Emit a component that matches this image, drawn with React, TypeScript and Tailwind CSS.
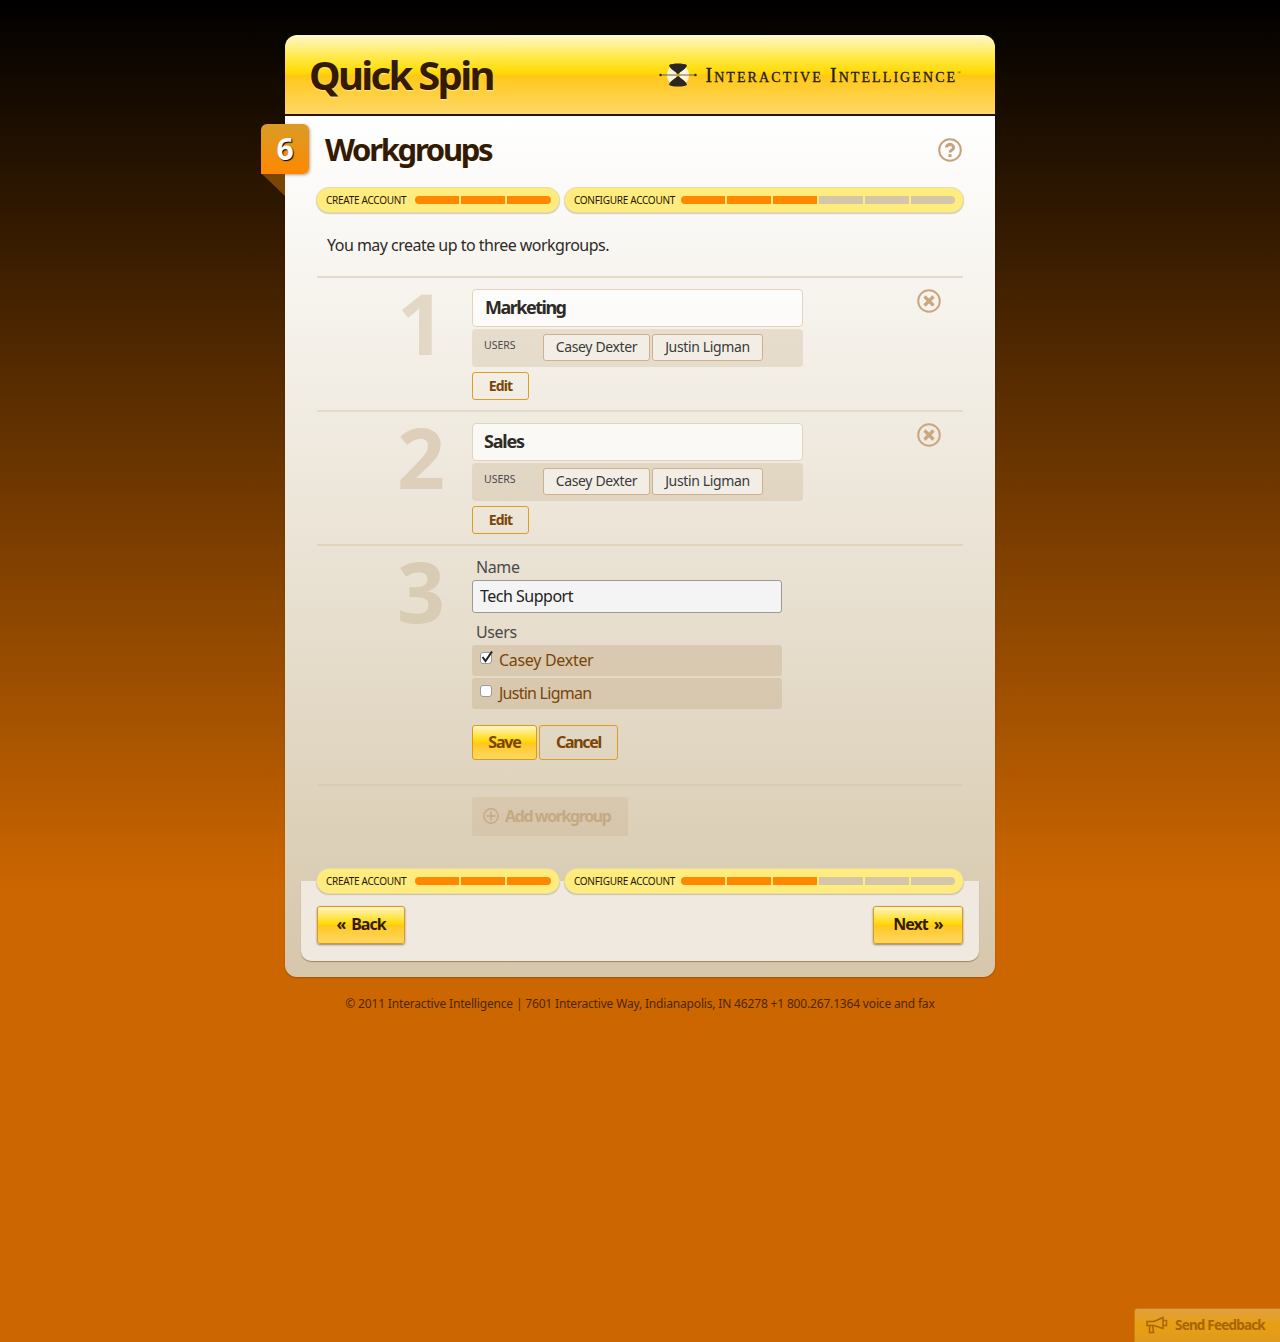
const goldButton =
  "bg-[linear-gradient(180deg,#fff6c4_0%,#ffd800_48%,#ffc820_52%,#ffd766_100%)] border border-[#d99a1c]";

function ProgressPill({ label, total, done, wide }: { label: string; total: number; done: number; wide?: boolean }) {
  return (
    <div
      className={`flex h-[26px] items-center justify-between rounded-[13px] border border-[#e6dca8] bg-[#ffec7f] pl-[9px] pr-[8px] shadow-[0_1px_1px_rgba(120,90,40,0.3)] ${
        wide ? "w-[400px]" : "w-[244px]"
      }`}
    >
      <span className="pb-[1px] text-[10px] leading-none tracking-[-0.28px] text-[#2a1500]">{label}</span>
      <div className="flex gap-[2px]">
        {Array.from({ length: total }).map((_, i) => (
          <span
            key={i}
            className={`block h-[8px] w-[44px] first:rounded-l-[4px] last:rounded-r-[4px] ${
              i < done ? "bg-[#ff8800]" : "bg-[#d6c6a9]"
            }`}
          />
        ))}
      </div>
    </div>
  );
}

function ProgressRow() {
  return (
    <div className="relative flex gap-[4px]">
      <ProgressPill label="CREATE ACCOUNT" total={3} done={3} />
      <ProgressPill label="CONFIGURE ACCOUNT" total={6} done={3} wide />
    </div>
  );
}

function Chip({ name, width }: { name: string; width: string }) {
  return (
    <span
      className={`flex h-[27px] items-center justify-center rounded-[3px] border border-[#cdb08c] bg-[#f3eee5] pb-[2px] text-[14px] tracking-[-0.35px] text-[#3a3a3a] ${width}`}
    >
      {name}
    </span>
  );
}

function Number({ n, color }: { n: string; color: string }) {
  return (
    <div className="w-[156px] shrink-0 pl-[81px]">
      <span className={`block text-[84px] font-bold leading-[68px] ${color}`}>{n}</span>
    </div>
  );
}

function RemoveIcon() {
  return (
    <svg viewBox="0 0 24 24" className="h-[24px] w-[24px]" fill="none" stroke="#c9a77f">
      <circle cx="12" cy="12" r="10.8" strokeWidth="2" />
      <path d="M7.5 7.5 L16.5 16.5 M16.5 7.5 L7.5 16.5" strokeWidth="3.2" />
    </svg>
  );
}

function HelpIcon() {
  return (
    <svg viewBox="0 0 24 24" className="h-[24px] w-[24px]" fill="none" stroke="#c4a27c">
      <circle cx="12" cy="12" r="10.8" strokeWidth="2" />
      <path d="M8.4 9.4a3.6 3 0 1 1 5.4 2.6c-1.2.7-1.8 1.2-1.8 2.6" strokeWidth="3" />
      <path d="M12 16.2v2.8" strokeWidth="3.2" />
    </svg>
  );
}

function PlusIcon() {
  return (
    <svg viewBox="0 0 16 16" className="mr-[6px] h-[16px] w-[16px] shrink-0" fill="none" stroke="#c4a983">
      <circle cx="8" cy="8" r="7.2" strokeWidth="1.4" />
      <path d="M8 3.5v9M3.5 8h9" strokeWidth="1.4" />
    </svg>
  );
}

function MegaphoneIcon() {
  return (
    <svg viewBox="0 0 22 18" className="mr-[7px] h-[18px] w-[22px]" fill="none" stroke="#a86408" strokeWidth="1.5">
      <path d="M1 5.5 H8 L17 1.5 V12.5 L8 9.5 H1 Z" />
      <path d="M17 4.5 H20.5 V9.5 H17" />
      <path d="M3.5 9.5 V16.5 H7.5 L6.5 9.5" />
    </svg>
  );
}

function SavedGroup({ n, name, color, nameClass }: { n: string; name: string; color: string; nameClass: string }) {
  return (
    <div className="mx-px flex h-[134px] border-t-2 border-[#e5dac8] pt-[11px]">
      <div className="-ml-px">
        <Number n={n} color={color} />
      </div>
      <div className="w-[331px]">
        <div
          className={`flex h-[38px] items-center rounded-[4px] border border-[#e3d3bc] bg-white/70 pb-[2px] pl-[11px] text-[18px] font-bold text-[#2e2a26] ${nameClass}`}
        >
          {name}
        </div>
        <div className="mt-[2px] flex h-[38px] rounded-[4px] bg-[#c8af8c]/30 pl-[12px] pt-[5px]">
          <span className="mt-[1px] w-[59px] text-[10.5px] leading-[20px] text-[#4a4a4a]">USERS</span>
          <div className="flex gap-[2px]">
            <Chip name="Casey Dexter" width="w-[107px]" />
            <Chip name="Justin Ligman" width="w-[111px]" />
          </div>
        </div>
        <button className="mt-[5px] h-[28px] w-[57px] rounded-[3px] border border-[#dd9c22] pb-[2px] text-[14px] font-bold tracking-[-0.9px] text-[#7a4505]">
          Edit
        </button>
      </div>
      <div className="ml-auto mr-[22px]">
        <RemoveIcon />
      </div>
    </div>
  );
}

function UserOption({ name, checked, nameClass }: { name: string; checked?: boolean; nameClass: string }) {
  return (
    <div className="flex h-[31px] items-center rounded-[3px] bg-[#bea078]/30 pb-[2px] pl-[8px] text-[16px] text-[#7a4505]">
      <span className="relative mb-[3px] block h-[12px] w-[12px] rounded-[3px] border border-[#9a9a9a] bg-white">
        {checked && (
          <svg viewBox="0 0 14 14" className="absolute -left-px -top-[3px] h-[14px] w-[14px]">
            <path d="M2.5 7 L5.5 11 L12 1.5" fill="none" stroke="#222" strokeWidth="2" />
          </svg>
        )}
      </span>
      <span className={`ml-[7px] ${nameClass}`}>{name}</span>
    </div>
  );
}

function LogoMark() {
  return (
    <svg viewBox="0 0 38 24" className="h-[24px] w-[38px]">
      <circle cx="19" cy="12" r="11" fill="#fff6d8" />
      <path d="M10 2 C14 0 24 0 28 2 C27 7 21 8 20 11 H18 C17 8 11 7 10 2 Z" fill="#2c2620" />
      <path d="M10 22 C14 24 24 24 28 22 C27 17 21 16 20 13 H18 C17 16 11 17 10 22 Z" fill="#2c2620" />
      <path d="M1 12 H37" stroke="#6b6258" strokeWidth="1" />
      <circle cx="1.5" cy="12" r="1.2" fill="#2c2620" />
      <circle cx="36.5" cy="12" r="1.2" fill="#2c2620" />
      <circle cx="19" cy="12" r="1.5" fill="#e0a010" />
    </svg>
  );
}

export default function App() {
  return (
    <div className="relative min-h-screen bg-[linear-gradient(180deg,#000_0,#c60_890px)] pt-[35px] font-['Noto_Sans','Open_Sans',sans-serif]">
      <div className="mx-auto w-[710px] rounded-[12px] shadow-[0_1px_2px_rgba(0,0,0,0.2)]">
        {/* header */}
        <div className="flex h-[81px] items-center justify-between rounded-t-[12px] border-b-2 border-[#2a1500] bg-[linear-gradient(180deg,#fff8cc_0%,#ffe840_30%,#ffd800_49%,#ffc818_51%,#ffd766_100%)] pl-[24px] pr-[34px]">
          <span className="text-[40px] font-bold leading-none tracking-[-2.7px] text-[#331a00] [text-shadow:0_1px_1px_rgba(255,255,255,0.5)]">
            Quick Spin
          </span>
          <div className="flex items-center gap-[8px]">
            <LogoMark />
            <span className="font-['Liberation_Serif',serif] text-[20px] leading-none tracking-[2.08px] text-[#1f1a12] [-webkit-text-stroke:0.3px_#1f1a12] [font-variant:small-caps]">
              Interactive Intelligence
              <span className="align-super text-[5px] tracking-normal [-webkit-text-stroke:0]">®</span>
            </span>
          </div>
        </div>

        {/* body */}
        <div className="relative rounded-b-[12px] bg-[linear-gradient(180deg,#fff_0%,#d6c7ab_100%)] pb-[16px]">
          <div className="absolute left-[-24px] top-[8px] flex h-[50px] w-[48px] items-center justify-center rounded-[6px] rounded-bl-none bg-[linear-gradient(180deg,#d99c26,#ff8800)] pb-[2px] text-[30px] font-bold text-white shadow-[1px_1px_3px_rgba(60,30,0,0.4)] [text-shadow:1px_1px_1px_#000]">
            6
          </div>
          <div className="absolute left-[-23px] top-[58px] h-0 w-0 border-l-[23px] border-t-[22px] border-l-transparent border-t-[#7a4505]" />

          <div className="px-[31px]">
            <div className="flex h-[71px] items-center justify-between pb-[3px] pl-[9px] pr-[2px]">
              <span className="pb-[2px] text-[31px] font-bold tracking-[-2.3px] text-[#331a00]">Workgroups</span>
              <HelpIcon />
            </div>
            <ProgressRow />
            <p className="flex h-[63px] items-center pl-[11px] text-[16px] tracking-[-0.52px] text-[#2e2a26]">
              You may create up to three workgroups.
            </p>

            <SavedGroup n="1" name="Marketing" color="text-[#e3d8c6]" nameClass="tracking-[-1.5px] pl-[12px]" />
            <SavedGroup n="2" name="Sales" color="text-[#decfba]" nameClass="tracking-[-1.2px]" />

            {/* third group, being edited */}
            <div className="mx-px flex h-[240px] border-t-2 border-[#e0d4bf] pt-[11px]">
              <div className="-ml-px">
                <Number n="3" color="text-[#d9ccb5]" />
              </div>
              <div className="w-[310px]">
                <label className="block pl-[4px] text-[16px] leading-[21px] tracking-[-0.4px] text-[#4a4a4a]">
                  Name
                </label>
                <input
                  readOnly
                  value="Tech Support"
                  className="mt-[2px] block h-[33px] w-full rounded-[3px] border border-[#999] bg-[#f4f4f4] pb-[2px] pl-[7px] text-[16px] tracking-[-0.5px] text-[#222] outline-none"
                />
                <label className="mt-[8px] block pl-[4px] text-[16px] leading-[22px] tracking-[-0.4px] text-[#4a4a4a]">
                  Users
                </label>
                <div className="mt-[2px] flex flex-col gap-[2px]">
                  <UserOption name="Casey Dexter" nameClass="tracking-[-0.3px]" checked />
                  <UserOption name="Justin Ligman" nameClass="tracking-[-0.75px]" />
                </div>
                <div className="mt-[16px] flex gap-[2px]">
                  <button
                    className={`h-[35px] w-[65px] rounded-[3px] pb-[2px] text-[16px] font-bold tracking-[-1.2px] text-[#7a4505] ${goldButton}`}
                  >
                    Save
                  </button>
                  <button className="h-[35px] w-[79px] rounded-[3px] border border-[#dd9c22] pb-[2px] text-[16px] font-bold tracking-[-1.3px] text-[#7a4505]">
                    Cancel
                  </button>
                </div>
              </div>
            </div>

            <div className="mx-px h-[97px] border-t-2 border-[#d9ccb5] pl-[155px] pt-[11px]">
              <div className="flex h-[39px] w-[156px] items-center rounded-[3px] bg-[#bea078]/20 pb-[2px] pl-[11px] text-[16px] font-bold tracking-[-1.4px] text-[#c4a983]">
                <PlusIcon />
                Add workgroup
              </div>
            </div>
          </div>

          {/* bottom panel */}
          <div className="mx-[16px] flex h-[80px] flex-col rounded-b-[10px] bg-[#efe9df] px-[15px] shadow-[0_1px_1px_rgba(120,90,40,0.6)]">
            <div className="-mt-[13px]">
              <ProgressRow />
            </div>
            <div className="mx-px mt-[12px] flex justify-between">
              <button
                className={`flex h-[38px] w-[88px] items-center justify-center gap-[6px] rounded-[3px] pb-[2px] text-[16px] font-bold tracking-[-1px] text-[#331a00] shadow-[0_1px_2px_rgba(60,30,0,0.5)] ${goldButton}`}
              >
                <span>«</span>
                <span>Back</span>
              </button>
              <button
                className={`flex h-[38px] w-[90px] items-center justify-center gap-[6px] rounded-[3px] pb-[2px] text-[16px] font-bold tracking-[-1px] text-[#331a00] shadow-[0_1px_2px_rgba(60,30,0,0.5)] ${goldButton}`}
              >
                <span>Next</span>
                <span>»</span>
              </button>
            </div>
          </div>
        </div>
      </div>

      <p className="mt-[18px] text-center text-[12px] leading-[17px] tracking-[-0.17px] text-[#4d2600]">
        © 2011 Interactive Intelligence | 7601 Interactive Way, Indianapolis, IN 46278 +1 800.267.1364 voice and fax
      </p>

      <div className="absolute bottom-0 right-0 flex h-[34px] w-[146px] items-center rounded-tl-[3px] border-l border-t border-[#c9820e] bg-[linear-gradient(180deg,#e0a040_0%,#e8a010_50%,#e09a20_100%)] pb-[1px] pl-[11px] text-[13.5px] font-bold tracking-[-0.8px] text-[#a86408]">
        <MegaphoneIcon />
        Send Feedback
      </div>
    </div>
  );
}
